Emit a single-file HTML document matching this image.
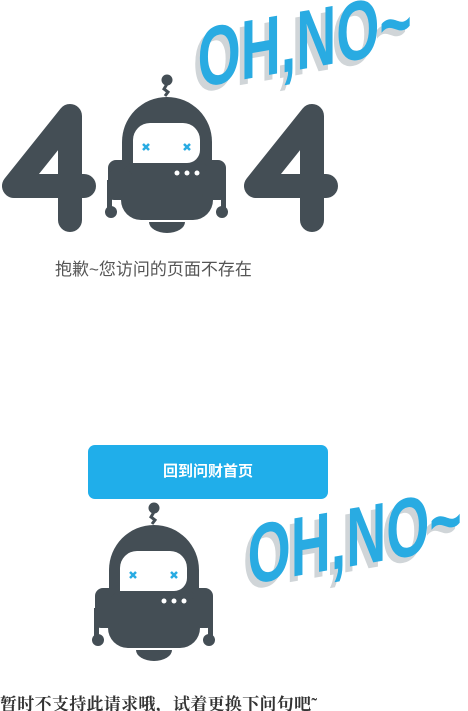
<!DOCTYPE html>
<html><head><meta charset="utf-8"><style>
html,body{margin:0;padding:0;background:#fff;width:468px;height:711px;overflow:hidden;position:relative}
.t1{position:absolute;left:55px;top:255px;font:17px "Liberation Sans","Noto Sans CJK SC",sans-serif;color:#555;white-space:nowrap}
.btn{position:absolute;left:88px;top:445px;width:240px;height:54px;background:#20aeea;border-radius:7px;color:#fff;font:bold 15px "Liberation Sans","Noto Sans CJK SC",sans-serif;text-align:center;line-height:54px}
.t2{position:absolute;left:0;top:690px;font:bold 17px "Liberation Serif","Noto Serif CJK SC",serif;color:#333;white-space:nowrap;letter-spacing:0.3px}
svg{position:absolute;left:0;top:0}
</style></head><body>
<svg width="468" height="711" viewBox="0 0 468 711">
<defs>
<g id="robot">
<circle cx="167" cy="80" r="5.5" fill="#444e55"/>
<path d="M167 84 L164 89 L168 92 L165 96" stroke="#444e55" stroke-width="3" fill="none"/>
<path d="M122 165 L122 142 A45 45 0 0 1 212 142 L212 165 Z" fill="#444e55"/>
<rect x="108" y="160" width="118" height="26" rx="8" fill="#444e55"/>
<rect x="121" y="160" width="92" height="60" rx="20" fill="#444e55"/>
<rect x="108" y="170" width="24" height="30" rx="6" fill="#444e55"/>
<rect x="202" y="170" width="24" height="30" rx="6" fill="#444e55"/>
<rect x="107" y="180" width="5" height="30" fill="#444e55"/>
<rect x="221" y="180" width="5" height="30" fill="#444e55"/>
<circle cx="111" cy="212" r="6" fill="#444e55"/>
<circle cx="222" cy="212" r="6" fill="#444e55"/>
<path d="M149 222 A18 11 0 0 0 185 222 Z" fill="#444e55"/>
<path d="M133 163 L133 140 A17 17 0 0 1 150 123 L183 123 A17 17 0 0 1 200 140 L200 150 A13 13 0 0 1 187 163 Z" fill="#fff"/>
<path d="M143 144 l6 6 M149 144 l-6 6 M184 144 l6 6 M190 144 l-6 6" stroke="#29abe2" stroke-width="2.5"/>
<circle cx="177" cy="173" r="2.5" fill="#fff"/><circle cx="187" cy="173" r="2.5" fill="#fff"/><circle cx="197" cy="173" r="2.5" fill="#fff"/>
</g>
<g id="ohno">
<text x="-3" y="5" transform="scale(0.66,1)" font-family="Liberation Sans,sans-serif" font-weight="bold" font-size="84" fill="#d0d5d8">OH,NO~</text>
<text x="4" y="0" transform="scale(0.66,1)" font-family="Liberation Sans,sans-serif" font-weight="bold" font-size="84" fill="#29abe2">OH,NO~</text>
</g>
</defs>
<g stroke="#444e55" stroke-width="24" stroke-linecap="round" stroke-linejoin="round" fill="none">
<path d="M70 220 L70 116 L14 186 L84 186"/>
<path d="M312 220 L312 116 L256 186 L326 186"/>
</g>
<use href="#robot"/>
<use href="#robot" transform="translate(-13,428)"/>
<g transform="translate(195,88) skewY(-10)"><use href="#ohno"/></g>
<g transform="translate(245,585) skewY(-10)"><use href="#ohno"/></g>
</svg>
<div class="t1">抱歉~您访问的页面不存在</div>
<div class="btn">回到问财首页</div>
<div class="t2">暂时不支持此请求哦，试着更换下问句吧˜</div>
</body></html>
